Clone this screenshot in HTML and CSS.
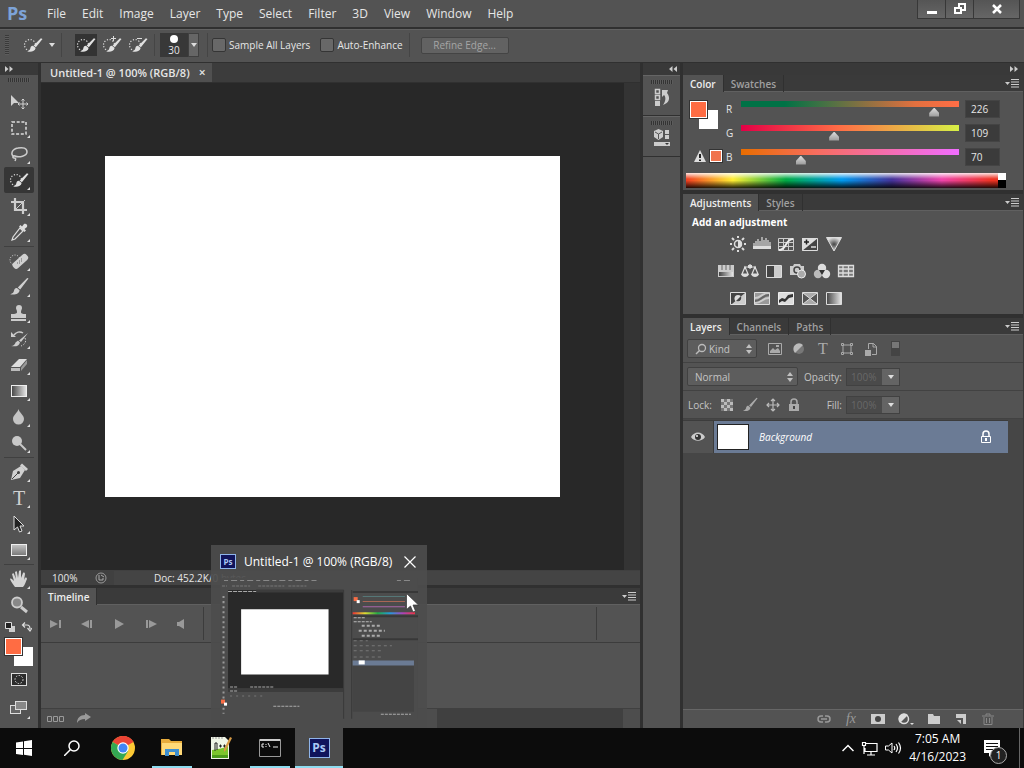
FILE: index.html
```html
<!DOCTYPE html>
<html lang="en">
<head>
    <meta charset="utf-8">
    <meta name="viewport" content="width=device-width, initial-scale=1.0">
    <title>Untitled-1 @ 100% (RGB/8)</title>
    <link rel="stylesheet" href="styles.css">
</head>
<body>
    <!-- shared icons -->
    <svg class="defs" aria-hidden="true">
        <defs>
            <linearGradient id="gray" x1="0" x2="1"><stop offset="0" stop-color="#444"/><stop offset="1" stop-color="#e8e8e8"/></linearGradient>
            <linearGradient id="grayDown" x1="0" x2="0" y1="0" y2="1"><stop offset="0" stop-color="#c4c4c4"/><stop offset="1" stop-color="#777"/></linearGradient>
            <radialGradient id="vib"><stop offset="0" stop-color="#444"/><stop offset="1" stop-color="#ddd"/></radialGradient>
            <linearGradient id="spectrum" x1="0" x2="1"><stop offset="0" stop-color="#e33"/><stop offset=".2" stop-color="#dd3"/><stop offset=".4" stop-color="#2a4"/><stop offset=".6" stop-color="#29d"/><stop offset=".8" stop-color="#a4b"/><stop offset="1" stop-color="#e34"/></linearGradient>
        </defs>
        <symbol id="menu" viewBox="0 0 14 9"><path d="M0 3h5L2.500 6z" fill="#ccc"/><path d="M6 .5h8M6 3h8M6 5.500h8M6 8h8" stroke="#ccc"/></symbol>
        <symbol id="quick" viewBox="0 0 20 20"><circle cx="7" cy="10" r="5.500" fill="none" stroke="#ddd" stroke-width="1.200" stroke-dasharray="1.200 1.680"/><path d="M19.500 4l-6.600 8.200-2.300-1.700 7.300-7.200zM10 10.800l2.600 2.200c-.5 3.300-4.600 4.600-8.600 3.400 2.500-.6 3-1.700 3.400-3.500.3-1.200 1.200-2.200 2.600-2.100z" fill="#e0e0e0"/></symbol>
        <symbol id="brush" viewBox="0 0 20 20"><path d="M19.500 1.500l-8.300 11-2.400-2 9.400-9.600zM8 11l2.600 2.300c-.4 3.600-4.400 4.800-9.400 4 2.900-.6 3.500-2.200 4-4.200.4-1.500 1.400-2.300 2.800-2.100z"/></symbol>
        <symbol id="updown" viewBox="0 0 6 10"><path d="M0 4l3-4 3 4zM0 6h6l-3 4z" fill="#c0c0c0"/></symbol>
        <symbol id="down" viewBox="0 0 6 4"><path d="M0 0h6L3 4z" fill="#ddd"/></symbol>
        <symbol id="right2" viewBox="0 0 8 6"><path d="M0 0l3.500 3L0 6zM4.500 0L8 3 4.500 6z" fill="#ccc"/></symbol>
        <symbol id="left2" viewBox="0 0 8 6"><path d="M3.500 0L0 3l3.500 3zM8 0L4.500 3 8 6z" fill="#ccc"/></symbol>
        <symbol id="lock" viewBox="0 0 12 14"><path d="M3 6V4a3 3 0 016 0v2" fill="none" stroke="currentColor" stroke-width="1.500"/><path d="M1.500 6.500h9v6h-9z" fill="none" stroke="currentColor"/><path d="M6 8v3" stroke="currentColor" stroke-width="2"/></symbol>
    </svg>

    <header class="menubar">
        <span class="logo">Ps</span>
        <nav class="menus">
            <button>File</button>
            <button>Edit</button>
            <button>Image</button>
            <button>Layer</button>
            <button>Type</button>
            <button>Select</button>
            <button>Filter</button>
            <button>3D</button>
            <button>View</button>
            <button>Window</button>
            <button>Help</button>
        </nav>
        <div class="window-buttons">
            <button aria-label="Minimize"><svg width="12" height="12"><path d="M1 8h10v3H1z" fill="#fff"/></svg></button>
            <button aria-label="Restore"><svg width="12" height="12"><path d="M5 4V1h6v6H8M1 5h6v5H1z" fill="none" stroke="#fff" stroke-width="2"/></svg></button>
            <button class="close" aria-label="Close"><svg width="12" height="12"><path d="M2 2l8 8M10 2l-8 8" stroke="#fff" stroke-width="2.500"/></svg></button>
        </div>
    </header>

    <section class="options">
        <span class="grip-v"></span>
        <button class="preset" aria-label="Tool preset"><svg width="20" height="20"><use href="#quick"/></svg><svg width="6" height="4"><use href="#down"/></svg></button>
        <div class="modes">
            <button class="on" aria-label="New selection"><svg width="20" height="20"><use href="#quick"/></svg></button>
            <button aria-label="Add to selection"><svg width="20" height="20"><use href="#quick"/><path d="M9 3.500h5M11.500 1v5" stroke="#ddd"/></svg></button>
            <button aria-label="Subtract from selection"><svg width="20" height="20"><use href="#quick"/><path d="M9 3.500h5" stroke="#ddd"/></svg></button>
        </div>
        <div class="size">
            <span class="tip"><i></i>30</span>
            <button aria-label="Brush picker"><svg width="6" height="4"><use href="#down"/></svg></button>
        </div>
        <div class="checks">
            <label><input type="checkbox">Sample All Layers</label>
            <label><input type="checkbox">Auto-Enhance</label>
        </div>
        <button class="refine" disabled>Refine Edge...</button>
    </section>

    <main class="workspace">
        <aside class="toolbar">
            <div class="strip"><svg width="8" height="6"><use href="#right2"/></svg></div>
            <span class="grip"></span>
            <div class="tools">
                <button class="tool single" aria-label="Move"><svg width="20" height="20"><path d="M2 3v11l3-3h5z" fill="#d0d0d0"/><path d="M14 7v10M9 12h10M12.500 8.500L14 7l1.500 1.500M12.500 15.500L14 17l1.500-1.500M10.500 10.500L9 12l1.500 1.500M17.500 10.500L19 12l-1.500 1.500" fill="none" stroke="#d0d0d0"/></svg></button>
                <button class="tool" aria-label="Marquee"><svg width="20" height="20"><path d="M3 4h14v12H3z" fill="none" stroke="#ddd" stroke-width="1.500" stroke-dasharray="3 1.700"/></svg></button>
                <button class="tool" aria-label="Lasso"><svg width="20" height="20"><path d="M5 13C1 10 3 5 9 4c5-1 9 0 9 4s-8 6-12 4c-2-1-3 2-1 2s2 1 1 3" fill="none" stroke="#ccc" stroke-width="1.500"/></svg></button>
                <button class="tool on" aria-label="Quick selection"><svg width="20" height="20"><use href="#quick"/></svg></button>
                <button class="tool" aria-label="Crop"><svg width="20" height="20"><path d="M6 2v12h12M2 6h12v12" fill="none" stroke="#ccc" stroke-width="2.200"/><path d="M7 13l9-9" stroke="#ccc"/></svg></button>
                <button class="tool" aria-label="Eyedropper"><svg width="20" height="20"><path d="M11 6l3 3-8 8-3 1 1-3z" fill="none" stroke="#ddd" stroke-width="1.200"/><path d="M10 4.500l1.500-1.500 1.500 1.500L15 2c2-1 4 1 3 3l-2.500 2L17 8.500 15.500 10z" fill="#ddd"/></svg></button>
                <hr>
                <button class="tool" aria-label="Healing brush"><svg width="20" height="20"><circle cx="6" cy="9" r="5" fill="none" stroke="#ddd" stroke-dasharray="1 1.500"/><rect x="2" y="7" width="18" height="7" rx="3" transform="rotate(-42 11 10)" fill="#d0d0d0"/><path d="M8 12h1M10 10h1M12 8h1M10 12h1M12 10h1" stroke="#666"/></svg></button>
                <button class="tool" aria-label="Brush"><svg width="20" height="20" fill="#d0d0d0"><use href="#brush"/></svg></button>
                <button class="tool" aria-label="Clone stamp"><svg width="20" height="20"><path d="M10 2c2 0 3 1 3 3 0 1.500-1 2-1 4 0 1.500 1 2 5 2v4H2v-4c5 0 6-.5 6-2 0-2-1-2.500-1-4 0-2 1-3 3-3zM2 16h15v2H2z" fill="#ccc"/></svg></button>
                <button class="tool" aria-label="History brush"><svg width="20" height="20"><path d="M19 4l-7 9-2-1.500zM9 11.500l2 2c-1 3.500-4 4.500-9 3.500 3 0 4-2 4.500-3.500zM2 3v5h5z" fill="#ccc"/><path d="M5 6c2-3 6-4 9-2" fill="none" stroke="#ccc" stroke-width="1.500"/><path d="M16 9c2 4-1 7-4 8" fill="none" stroke="#ccc" stroke-dasharray="1.500 1.500"/></svg></button>
                <button class="tool" aria-label="Eraser"><svg width="20" height="20"><path d="M2 12l8-8h8l-7 8z" fill="#ddd"/><path d="M2 13h9v3H2z" fill="#bbb"/><path d="M12 12.500L18 5v4l-6 7z" fill="#999"/></svg></button>
                <button class="tool" aria-label="Gradient"><svg width="20" height="20"><rect x="2.500" y="4.500" width="15" height="11" fill="url(#gray)" stroke="#eee"/></svg></button>
                <button class="tool" aria-label="Blur"><svg width="20" height="20"><path d="M9.500 2c1 4 5.500 6 5.500 10a5.500 5.500 0 01-11 0c0-4 4.500-6 5.500-10z" fill="#c4c4c4"/></svg></button>
                <button class="tool" aria-label="Dodge"><svg width="20" height="20"><circle cx="8" cy="8" r="5" fill="#c8c8c8"/><path d="M11 11l6 6" stroke="#c8c8c8" stroke-width="2"/></svg></button>
                <hr>
                <button class="tool" aria-label="Pen"><svg width="20" height="20"><path d="M2 18l2-9 8-5 4 4-5 8z" fill="#d0d0d0"/><path d="M12 2.500l6 5.500" stroke="#d0d0d0" stroke-width="3"/><path d="M3 17l6-6" stroke="#444"/><circle cx="9.500" cy="10.500" r="1.500" fill="#444"/></svg></button>
                <button class="tool type" aria-label="Type">T</button>
                <button class="tool" aria-label="Path selection"><svg width="20" height="20"><path d="M5 2v14l3.500-3 2 5 2.500-1-2-5h4z" fill="#222" stroke="#ddd"/></svg></button>
                <button class="tool" aria-label="Rectangle"><svg width="20" height="20"><rect x="2.500" y="4.500" width="15" height="11" fill="url(#grayDown)" stroke="#eee"/></svg></button>
                <hr>
                <button class="tool" aria-label="Hand"><svg width="20" height="20"><path d="M6 18C4 15 2 13 1 10c1-1 2 0 4 2L3 5c1-1 2-1 2 0l2 5-1-7c1-1 2-1 2 0l1 6 1-7c1-1 2-1 2 0v7l2-5c1-1 2 0 2 1l-1 6 1-2c1-1 2 0 2 1-1 2-2 6-4 8z" fill="#d4d4d4"/></svg></button>
                <button class="tool single" aria-label="Zoom"><svg width="20" height="20"><circle cx="8" cy="7.500" r="5" fill="#888" stroke="#ccc" stroke-width="1.800"/><path d="M12 12l6 5" stroke="#ccc" stroke-width="3"/></svg></button>
            </div>
            <div class="swap">
                <svg width="10" height="10"><path d="M4 4h6v6H4z" fill="#ccc"/><path d="M.5.500h6v6h-6z" fill="#222" stroke="#ddd"/></svg>
                <svg width="11" height="10"><path d="M2 3h4c2 0 3 1 3 4M4 .5L1.500 3 4 5.500M6.500 6L9 9l2-3" fill="none" stroke="#ddd" stroke-width="1.200"/></svg>
            </div>
            <div class="swatches"><button class="fg" aria-label="Foreground color"></button><button class="bg" aria-label="Background color"></button></div>
            <button class="tool mode single" aria-label="Quick mask"><svg width="20" height="20"><rect x="2.500" y="3.500" width="15" height="12" fill="#2c2c2c" stroke="#ddd"/><circle cx="10" cy="9.500" r="4" fill="none" stroke="#ddd" stroke-dasharray="1.500 1.500"/></svg></button>
            <button class="tool mode" aria-label="Screen mode"><svg width="20" height="20"><rect x="1.500" y="7.500" width="10" height="8" fill="#666" stroke="#ddd"/><rect x="6.500" y="3.500" width="11" height="8" fill="#888" stroke="#ddd"/></svg></button>
        </aside>

        <section class="document">
            <div class="doc-tabs">
                <div class="doc-tab">Untitled-1 @ 100% (RGB/8)<button aria-label="Close tab">×</button></div>
            </div>
            <div class="stage">
                <div class="pasteboard"><div class="artboard"></div></div>
                <div class="scroll-track"></div>
            </div>
            <div class="status">
                <span class="zoom">100%</span>
                <button aria-label="Adobe Drive"><svg width="12" height="12"><circle cx="6" cy="6" r="5" fill="none" stroke="#999"/><path d="M4 3v5h4V6M6 3l3 2" fill="none" stroke="#aaa"/></svg></button>
                <span class="doc-size">Doc: 452.2K/0 bytes</span>
            </div>
            <div class="timeline">
                <div class="tabs"><button class="tab on">Timeline</button><button class="panel-menu" aria-label="Timeline menu"><svg width="14" height="9"><use href="#menu"/></svg></button></div>
                <div class="playback">
                    <button aria-label="First frame"><svg width="14" height="10"><path d="M1 1l8 4-8 4zM10 1h2v8h-2z" fill="#999"/></svg></button>
                    <button aria-label="Previous frame"><svg width="14" height="10"><path d="M8 1L0 5l8 4zM9 1h2v8H9z" fill="#999"/></svg></button>
                    <button aria-label="Play"><svg width="14" height="10"><path d="M2 0l9 5-9 5z" fill="#999"/></svg></button>
                    <button aria-label="Next frame"><svg width="14" height="10"><path d="M1 1h2v8H1zM4 1l8 4-8 4z" fill="#999"/></svg></button>
                    <button aria-label="Mute"><svg width="8" height="10"><path d="M0 3h2l5-3v10L2 7H0z" fill="#999"/></svg></button>
                    <span class="ruler"></span>
                </div>
                <div class="tracks"></div>
                <div class="timeline-foot">
                    <svg width="18" height="8"><path d="M.5 1.500h4v5h-4zM6.500 1.500h4v5h-4zM12.500 1.500h4v5h-4z" fill="none" stroke="#999"/></svg>
                    <svg width="14" height="11"><path d="M8 0l6 4-6 4V6C4 6 2 7 0 10c0-5 3-8 8-8z" fill="#999"/></svg>
                    <span class="hbar"></span>
                </div>
            </div>
        </section>

        <aside class="dock">
            <div class="strip"><svg width="8" height="6"><use href="#left2"/></svg></div>
            <div class="dock-group"><span class="grip"></span><button aria-label="History"><svg width="18" height="20"><path d="M2.500 2.500h4v4h-4zM2.500 8.500h4v4h-4z" fill="none" stroke="#ccc" stroke-width="1.500"/><path d="M2 14h5v5H2z" fill="#ccc"/><path d="M9 3h6l-1 3c4 5 2 10-4 12 3-4 3-8 1-10l-2 2z" fill="#ccc"/></svg></button></div>
            <div class="dock-group"><span class="grip"></span><button aria-label="Properties"><svg width="18" height="20"><path d="M5.500 1L10 3v6l-4.500 3L1 9V3z" fill="#ccc"/><path d="M2 4l3.500 2L9 4M5.500 6v5" stroke="#555" fill="none"/><path d="M12 2h4v4h-4zM12 7h4v4h-4zM1 14h16v4H1z" fill="#ccc"/><path d="M12 15h4l-2 2z" fill="#333"/></svg></button></div>
        </aside>

        <aside class="panels">
            <div class="strip end"><svg width="8" height="6"><use href="#right2"/></svg></div>

            <section class="panel">
                <div class="tabs"><button class="tab on">Color</button><button class="tab">Swatches</button><button class="panel-menu" aria-label="Color menu"><svg width="14" height="9"><use href="#menu"/></svg></button></div>
                <div class="color">
                    <div class="color-side">
                        <div class="swatches"><button class="fg" aria-label="Set foreground color"></button><button class="bg" aria-label="Set background color"></button></div>
                        <div class="gamut"><svg width="12" height="12"><path d="M6 0l6 12H0z" fill="#ddd"/><path d="M6 4v4M6 9.500v1.500" stroke="#222" stroke-width="2"/></svg><i></i></div>
                    </div>
                    <div class="channels">
                        <div class="channel"><label for="red">R</label><div class="slider red"><input type="range" id="red" max="255" value="226"></div><input type="text" value="226" aria-label="Red value"></div>
                        <div class="channel"><label for="green">G</label><div class="slider green"><input type="range" id="green" max="255" value="109"></div><input type="text" value="109" aria-label="Green value"></div>
                        <div class="channel"><label for="blue">B</label><div class="slider blue"><input type="range" id="blue" max="255" value="70"></div><input type="text" value="70" aria-label="Blue value"></div>
                    </div>
                </div>
                <div class="ramp"><span class="hues"></span><span class="bw"></span></div>
            </section>

            <section class="panel">
                <div class="tabs"><button class="tab on">Adjustments</button><button class="tab">Styles</button><button class="panel-menu" aria-label="Adjustments menu"><svg width="14" height="9"><use href="#menu"/></svg></button></div>
                <div class="adjust">
                    <h2>Add an adjustment</h2>
                    <div class="adjust-row">
                        <button aria-label="Brightness/Contrast"><svg width="18" height="16"><circle cx="9" cy="8" r="3.500" fill="none" stroke="#ddd" stroke-width="1.500"/><path d="M9 4a4 4 0 010 8zM8 0h2v2H8zM8 14h2v2H8zM1 7h2v2H1zM15 7h2v2h-2z" fill="#ddd"/><path d="M3 2l2 2M15 2l-2 2M3 14l2-2M15 14l-2-2" stroke="#ddd" stroke-width="2"/></svg></button>
                        <button aria-label="Levels"><svg width="18" height="16"><path d="M0 10h18v3H0z" fill="#ddd"/><path d="M1 10V7M3 10V5M5 10V3M7 10V5M9 10V1M11 10V4M13 10V2M15 10V4M17 10V6" stroke="#ddd" stroke-width="1.200"/></svg></button>
                        <button aria-label="Curves"><svg width="18" height="16"><path d="M1.500 2.500h15v12h-15zM1 6.500h16M1 10.500h16M6.500 2v13M11.500 2v13" fill="none" stroke="#ccc"/><path d="M2 14c8 0 6-11 14-11" fill="none" stroke="#eee" stroke-width="2"/></svg></button>
                        <button aria-label="Exposure"><svg width="18" height="16"><path d="M1.500 2.500h15v12h-15z" fill="#444" stroke="#ddd"/><path d="M1 15V2h16z" fill="#ddd"/><path d="M3 6h5M5.500 3.500v5" stroke="#222" stroke-width="1.500"/><path d="M10 11h5" stroke="#ddd" stroke-width="1.500"/></svg></button>
                        <button aria-label="Vibrance"><svg width="18" height="16"><path d="M1.500 1.500h15L9 15z" fill="url(#vib)" stroke="#ddd"/></svg></button>
                    </div>
                    <div class="adjust-row">
                        <button aria-label="Hue/Saturation"><svg width="18" height="16"><path d="M1 2h16v12H1z" fill="#ccc"/><path d="M5 2v5M9 2v5M13 2v5" stroke="#666"/><path d="M2 9h14v4H2z" fill="url(#gray)"/></svg></button>
                        <button aria-label="Color balance"><svg width="18" height="16"><path d="M9 1v5M3 4h12M4 4l-3 7h6zM14 4l-3 7h6z" fill="none" stroke="#ddd" stroke-width="1.200"/><path d="M0 11h8c-1 4-7 4-8 0zM10 11h8c-1 4-7 4-8 0zM7 2h4v3H7z" fill="#ddd"/></svg></button>
                        <button aria-label="Black and white"><svg width="18" height="16"><path d="M1.500 2.500h15v12h-15z" fill="#444" stroke="#ddd"/><path d="M9 3h7v11H9z" fill="#ccc"/></svg></button>
                        <button aria-label="Photo filter"><svg width="18" height="16"><path d="M1 3h3l1-2h6l1 2h3v9H1z" fill="#ccc"/><circle cx="8" cy="7" r="3" fill="none" stroke="#444" stroke-width="1.500"/><circle cx="12.500" cy="11" r="4" fill="#aaa" stroke="#eee"/></svg></button>
                        <button aria-label="Channel mixer"><svg width="18" height="16"><circle cx="9" cy="5" r="4.200" fill="#ddd"/><circle cx="5" cy="11" r="4.200" fill="#bbb"/><circle cx="13" cy="11" r="4.200" fill="#ddd"/><path d="M6 7h6l-3 5z" fill="#333"/></svg></button>
                        <button aria-label="Color lookup"><svg width="18" height="16"><path d="M1 2h16v12H1z" fill="#777"/><path d="M1.500 2.500h15v11h-15zM1 6h16M1 10h16M6 2v12M11.500 2v12" fill="none" stroke="#ddd" stroke-width="1.300"/></svg></button>
                    </div>
                    <div class="adjust-row">
                        <button aria-label="Invert"><svg width="18" height="16"><path d="M1.500 2.500h15v12h-15z" fill="#444" stroke="#ddd"/><path d="M3 14L16 3v11z" fill="#ccc"/><circle cx="9" cy="8.500" r="3.500" fill="#ddd"/><path d="M7 11l5-5c1 4-1 6-5 5z" fill="#444"/></svg></button>
                        <button aria-label="Posterize"><svg width="18" height="16"><path d="M1.500 2.500h15v12h-15z" fill="#999" stroke="#ddd"/><path d="M2 8C8 8 9 3 16 3M2 13c7 0 7-5 14-5" fill="none" stroke="#ccc" stroke-width="2"/><path d="M2 11c6 0 7-6 14-6" fill="none" stroke="#666" stroke-width="2"/></svg></button>
                        <button aria-label="Threshold"><svg width="18" height="16"><path d="M1.500 2.500h15v12h-15z" fill="#ddd" stroke="#eee"/><path d="M2 10l3-2 3 1 3-4 5-1v3l-4 1-4 4-3-1-3 2z" fill="#333"/></svg></button>
                        <button aria-label="Selective color"><svg width="18" height="16"><path d="M1.500 2.500h15v12h-15z" fill="#aaa" stroke="#ddd"/><path d="M2 3l7 5.500L2 14zM16 3L9 8.500l7 5.500z" fill="#555"/><path d="M2 3l14 11M16 3L2 14" stroke="#ddd"/></svg></button>
                        <button aria-label="Gradient map"><svg width="18" height="16"><path d="M1.500 2.500h15v12h-15z" fill="url(#gray)" stroke="#ddd"/></svg></button>
                    </div>
                </div>
            </section>

            <section class="panel layers">
                <div class="tabs"><button class="tab on">Layers</button><button class="tab">Channels</button><button class="tab">Paths</button><button class="panel-menu" aria-label="Layers menu"><svg width="14" height="9"><use href="#menu"/></svg></button></div>
                <div class="layer-row">
                    <div class="pick kind">
                        <select aria-label="Filter type"><option>Kind</option></select>
                        <svg class="find" width="12" height="12"><circle cx="7" cy="5" r="3.500" fill="none" stroke="#bbb" stroke-width="1.300"/><path d="M4.500 7.500L1 11" stroke="#bbb" stroke-width="1.500"/></svg>
                        <svg class="arrows" width="6" height="10"><use href="#updown"/></svg>
                    </div>
                    <div class="filters">
                        <button aria-label="Pixel layers"><svg width="14" height="14"><path d="M.5 1.500h13v11H.5z" fill="none" stroke="#aaa"/><path d="M2 11V9l3-3 2 2 3-2 2 3v2z" fill="#aaa"/><path d="M8 3h3v2H8z" fill="#aaa"/></svg></button>
                        <button aria-label="Adjustment layers"><svg width="14" height="14"><circle cx="7" cy="7" r="5" fill="#777"/><path d="M3 11a5.500 5.500 0 018-8z" fill="#bbb"/></svg></button>
                        <button class="letter" aria-label="Type layers">T</button>
                        <button aria-label="Shape layers"><svg width="14" height="14"><path d="M3 3h8v8H3z" fill="none" stroke="#aaa"/><path d="M1.500 1.500h2v2h-2zM10.500 1.500h2v2h-2zM1.500 10.500h2v2h-2zM10.500 10.500h2v2h-2z" fill="#555" stroke="#aaa"/></svg></button>
                        <button aria-label="Smart objects"><svg width="14" height="14"><path d="M4.500 7V1.500h5l3 3v8H8M9 1v4h4" fill="none" stroke="#aaa"/><path d="M1 8h6v6H1z" fill="#aaa"/></svg></button>
                        <button class="toggle" aria-label="Toggle filtering"></button>
                    </div>
                </div>
                <div class="layer-row">
                    <div class="pick blend">
                        <select aria-label="Blend mode" disabled><option>Normal</option></select>
                        <svg class="arrows" width="6" height="10"><use href="#updown"/></svg>
                    </div>
                    <label class="percent">Opacity:<span><input type="text" value="100%" disabled><button disabled aria-label="Opacity slider"><svg width="6" height="4"><use href="#down"/></svg></button></span></label>
                </div>
                <div class="layer-row">
                    <div class="locks">
                        <span>Lock:</span>
                        <button aria-label="Lock pixels"><svg width="14" height="14"><path d="M1 1h12v12H1z" fill="#777"/><path d="M1 1h3v3H1zM7 1h3v3H7zM4 4h3v3H4zM10 4h3v3h-3zM1 7h3v3H1zM7 7h3v3H7zM4 10h3v3H4zM10 10h3v3h-3z" fill="#bbb"/></svg></button>
                        <button aria-label="Lock image"><svg width="16" height="16" fill="#aaa"><use href="#brush"/></svg></button>
                        <button aria-label="Lock position"><svg width="14" height="14"><path d="M7 1v12M1 7h12M5 3l2-2 2 2M5 11l2 2 2-2M3 5L1 7l2 2M11 5l2 2-2 2" fill="none" stroke="#bbb" stroke-width="1.200"/></svg></button>
                        <button aria-label="Lock all"><svg width="12" height="14"><path d="M3 6V4a3 3 0 016 0v2" fill="none" stroke="#aaa" stroke-width="1.500"/><path d="M1 6h10v7H1z" fill="#aaa"/><path d="M6 8v3" stroke="#444" stroke-width="2"/></svg></button>
                    </div>
                    <label class="percent">Fill:<span><input type="text" value="100%" disabled><button disabled aria-label="Fill slider"><svg width="6" height="4"><use href="#down"/></svg></button></span></label>
                </div>
                <div class="layer-list">
                    <div class="layer">
                        <button class="eye" aria-label="Visibility"><svg width="14" height="10"><path d="M0 5c3-6 11-6 14 0-3 5-11 5-14 0z" fill="#ccc"/><circle cx="7" cy="5" r="3" fill="#333"/><circle cx="6" cy="4" r="1" fill="#eee"/></svg></button>
                        <div class="layer-body"><span class="layer-thumb"></span><em>Background</em><svg width="12" height="14"><use href="#lock"/></svg></div>
                    </div>
                </div>
                <div class="layer-foot">
                    <button aria-label="Link"><svg width="14" height="12"><path d="M6 3H4a3 3 0 000 6h2M8 3h2a3 3 0 010 6H8M4 6h6" fill="none" stroke="#999" stroke-width="1.500"/></svg></button>
                    <button class="fx" aria-label="Layer style">fx</button>
                    <button aria-label="Mask"><svg width="14" height="12"><path d="M0 1h14v10H0z" fill="#ccc"/><circle cx="7" cy="6" r="3" fill="#444"/></svg></button>
                    <button aria-label="Adjustment layer"><svg width="16" height="12"><circle cx="6" cy="6" r="4.500" fill="#555" stroke="#ddd" stroke-width="1.500"/><path d="M2 10a5.500 5.500 0 018-8z" fill="#ddd"/><path d="M12 10h4l-2 2z" fill="#ddd"/></svg></button>
                    <button aria-label="Group"><svg width="14" height="12"><path d="M1 1h5l1 2h6v8H1z" fill="#ccc"/></svg></button>
                    <button aria-label="New layer"><svg width="14" height="12"><path d="M2 1h10v10H9V5H2z" fill="#ccc"/><path d="M3 7h4v4z" fill="#ccc"/></svg></button>
                    <button aria-label="Delete"><svg width="14" height="12"><path d="M1 3h12M5 2.500V1h4v1.500M3 4v7.500h8V4M5.500 5v5M8.500 5v5" fill="none" stroke="#888"/></svg></button>
                </div>
            </section>
        </aside>
    </main>

    <footer class="taskbar">
        <button class="task start" aria-label="Start"><svg width="16" height="16"><path d="M0 2.500l7-1V8H0zM8 1.300L16 0v8H8zM0 9h7v6l-7-1zM8 9h8v7l-8-1.200z" fill="#fff"/></svg></button>
        <button class="task search" aria-label="Search"><svg width="16" height="16"><circle cx="10" cy="6" r="5" fill="none" stroke="#fff" stroke-width="1.500"/><path d="M6.500 9.500L0 16" stroke="#fff" stroke-width="1.500"/></svg></button>
        <button class="task" aria-label="Chrome"><svg width="24" height="24"><circle cx="12" cy="12" r="12" fill="#fcc934"/><path d="M12 12L1.600 6A12 12 0 0122.400 6z" fill="#ea4335"/><path d="M12 6h10.400A12 12 0 0012 0z" fill="#ea4335"/><path d="M1.600 6A12 12 0 0011.500 24l5.700-9-5.200-3z" fill="#34a853"/><circle cx="12" cy="12" r="5.700" fill="#fff"/><circle cx="12" cy="12" r="4.500" fill="#4285f4"/></svg></button>
        <button class="task open" aria-label="File Explorer"><svg width="22" height="20"><path d="M0 1h8l2 2h11v14H0z" fill="#e8ac3c"/><path d="M1 5h20v12H1z" fill="#ffd978"/><path d="M4 18v-7h14v7h-4v-4H8v4z" fill="#3f8fd0"/></svg></button>
        <button class="task" aria-label="Notepad++"><svg width="24" height="24"><path d="M2 1h14l4 4v18H2z" fill="#f0f5e6"/><path d="M3 14c5-1 10-1 16-4v12H3z" fill="#7cc52c"/><path d="M3 19h16v3H3z" fill="#4c9a1c"/><path d="M4 1v2M7 1v2M10 1v2M13 1v2" stroke="#999"/><path d="M6 7v8M6 7h2v7M10 10h3M14 10h3M11.500 8.500v3M15.500 8.500v3" fill="none" stroke="#222"/><path d="M21 1l2 1-6 12-2 2v-3z" fill="#d79a45"/></svg></button>
        <button class="task open" aria-label="Command Prompt"><svg width="22" height="20"><path d="M.5 1.500h21v17H.5z" fill="#0b0b0b" stroke="#999"/><path d="M1 1h20v2H1z" fill="#ccc"/><path d="M3 6h2M3 6v3h2M7 6v1M7 8v1M9 5l2 4M14 9h5" stroke="#eee" fill="none"/></svg></button>
        <div class="task-wrap">
            <button class="task open active" aria-label="Photoshop"><span class="ps-icon">Ps</span></button>
            <div class="preview">
                <div class="preview-head"><span class="ps-icon small">Ps</span><span class="preview-title">Untitled-1 @ 100% (RGB/8)</span><button aria-label="Close window"><svg width="12" height="12"><path d="M.5.500l11 11M11.500.500l-11 11" stroke="#fff" stroke-width="1.200"/></svg></button></div>
                <svg class="mini" viewBox="0 0 197 140">
                    <path d="M0 0h197v140H0z" fill="#4c4c4c"/>
                    <path d="M8 12h115v98H8z" fill="#292929"/>
                    <path d="M21 31h87v65H21z" fill="#fff"/>
                    <path d="M36 13h87M8 112h115" stroke="#3c3c3c" stroke-width="3"/>
                    <path d="M123 12v128M131 12v128" stroke="#3a3a3a"/>
                    <path d="M132 14h65M132 38h65M132 61h65" stroke="#383838" stroke-width="2"/>
                    <path d="M132 86h61v47h-61z" fill="#444"/>
                    <path d="M132 82h61v5h-61z" fill="#6b7b94"/><path d="M138 82h6v4h-6z" fill="#fff"/>
                    <path d="M4 2.500h92M176 2.500h16" stroke="#888" stroke-dasharray="4 3 6 3"/>
                    <path d="M2 8h5M12 8h18M38 8h26M68 8h18" stroke="#777" stroke-dasharray="3 1"/>
                    <path d="M8 13.500h28" stroke="#aaa" stroke-dasharray="4 1"/>
                    <path d="M3.500 18v102M3.500 129v6" stroke="#999" stroke-width="2" stroke-dasharray="2 3"/>
                    <path d="M1 121h4v4H1z" fill="#f76d46"/><path d="M4 124h3v3H4z" fill="#fff"/>
                    <path d="M133 19h4v4h-4z" fill="#f76d46"/><path d="M136 22h3v3h-3z" fill="#fff"/>
                    <path d="M142 18.500h42" stroke="#577"/><path d="M142 23.500h42" stroke="#a65"/><path d="M142 28.500h42" stroke="#a6a"/>
                    <path d="M132 34h62v2h-62z" fill="url(#spectrum)"/>
                    <path d="M133 39.500h12M133 43.500h18" stroke="#bbb" stroke-dasharray="3 1"/>
                    <path d="M141 47.500h20M138 52.500h26M141 57.500h20" stroke="#aaa" stroke-width="2" stroke-dasharray="3 2"/>
                    <path d="M133 62.500h14M133 67.500h38M133 72.500h28M133 78.500h30" stroke="#777" stroke-dasharray="3 3"/>
                    <path d="M10 108.500h7M30 108.500h24M10 112.500h7M53 127.500h26M160 135.500h30" stroke="#aaa" stroke-dasharray="3 1"/>
                    <path d="M10 117.500h36" stroke="#777" stroke-dasharray="2 4"/>
                </svg>
                <svg class="cursor" width="13" height="20"><path d="M.5.500v16l4-3.500 2.500 6 2.500-1L7 12h5.500z" fill="#fff" stroke="#333" stroke-width=".7"/></svg>
            </div>
        </div>
        <div class="tray">
            <button aria-label="Show hidden icons"><svg width="12" height="8"><path d="M.5 7L6 1.500 11.500 7" fill="none" stroke="#fff" stroke-width="1.500"/></svg></button>
            <button aria-label="Network"><svg width="17" height="15"><path d="M5 2.500h11v8H4V7M10 11v3M6 14h8M1.500 1.500h3v3h-3zM3 4v9" fill="none" stroke="#fff" stroke-width="1.200"/></svg></button>
            <button aria-label="Volume"><svg width="17" height="14"><path d="M.5 5h3L7 2v10L3.500 9h-3z" fill="none" stroke="#fff"/><path d="M9 5q1.500 2 0 4M11 3q3 4 0 8M13.500 1.500q4 5.500 0 11" fill="none" stroke="#fff" stroke-width="1.200"/></svg></button>
            <button class="clock"><span>7:05 AM</span><span>4/16/2023</span></button>
            <button class="notes" aria-label="Notifications"><svg width="16" height="17"><path d="M0 0h16v13H8l-3 4v-4H0z" fill="#fff"/><path d="M2 3.500h12M2 6.500h12M2 9.500h12" stroke="#111"/></svg><span class="badge">1</span></button>
            <span class="show-desktop"></span>
        </div>
    </footer>
</body>
</html>
```
FILE: styles.css
```css
* {
    box-sizing: border-box;
}

body {
    margin: 0;
    min-height: 100vh;
    display: flex;
    flex-direction: column;
    background-color: #535353;
    color: #e6e6e6;
    font-family: "Open Sans", "Noto Sans", sans-serif;
    font-size: 10px;
    line-height: 14px;
}

button {
    padding: 0;
    border: none;
    background: none;
    color: inherit;
    font: inherit;
    display: flex;
    align-items: center;
    justify-content: center;
}

input,
select {
    font: inherit;
    color: inherit;
    margin: 0;
}

svg {
    display: block;
    flex-shrink: 0;
}

.defs {
    position: absolute;
    width: 0;
    height: 0;
}

/* menu bar */
.menubar {
    display: flex;
    height: 29px;
    border-bottom: 2px solid #303030;
}

.logo {
    width: 39px;
    padding-left: 7px;
    font-size: 18px;
    line-height: 26px;
    font-weight: bold;
    color: #7da3d8;
}

.menus {
    display: flex;
    flex: 1;
    font-size: 12px;
}

.menus button {
    padding: 0 8px;
}

.window-buttons {
    display: flex;
    height: 19px;
    margin-right: 4px;
    border: 1px solid #383838;
    border-top: none;
    background: linear-gradient(#555, #666);
}

.window-buttons button {
    width: 28px;
    border-right: 1px solid #383838;
}

.window-buttons .close {
    width: 45px;
    border-right: none;
}

/* options bar */
.options {
    display: flex;
    align-items: center;
    height: 34px;
    padding: 0 0 2px 5px;
    border-top: 1px solid #626262;
    border-bottom: 1px solid #303030;
}

.grip-v {
    width: 4px;
    height: 20px;
    background: repeating-linear-gradient(#3a3a3a 0 1px, #5c5c5c 1px 2px);
}

.preset {
    gap: 6px;
    width: 53px;
    height: 24px;
    padding-left: 7px;
    border-right: 1px solid #454545;
}

.modes {
    display: flex;
    gap: 4px;
    padding: 0 5px 0 13px;
    border-right: 1px solid #454545;
}

.modes button {
    width: 22px;
    height: 22px;
}

.modes .on {
    background-color: #333;
}

.size {
    display: flex;
    height: 24px;
    padding: 0 8px 0 5px;
    border-right: 1px solid #454545;
}

.size button {
    width: 11px;
    background-color: #666;
    border: 1px solid #404040;
}

.tip {
    width: 28px;
    display: flex;
    flex-direction: column;
    align-items: center;
    background-color: #383838;
    line-height: 14px;
}

.tip i {
    width: 8px;
    height: 8px;
    margin-top: 2px;
    border-radius: 50%;
    background-color: #fff;
}

.checks {
    display: flex;
    gap: 10px;
    padding: 0 6px 0 4px;
    height: 24px;
    border-right: 1px solid #454545;
}

.checks label {
    display: flex;
    align-items: center;
    gap: 3px;
}

.checks input {
    appearance: none;
    width: 14px;
    height: 14px;
    border: 1px solid #353535;
    border-radius: 2px;
    background-color: #686868;
}

.refine {
    margin-left: 11px;
    width: 88px;
    height: 17px;
    border: 1px solid #444;
    border-radius: 2px;
    background-color: #626262;
    color: #a5a5a5;
}

/* workspace */
.workspace {
    display: flex;
    flex: 1;
    background-color: #303030;
    gap: 3px;
}

.strip {
    height: 12px;
    padding: 3px 5px;
    display: flex;
    background-color: #393939;
}

.strip.end {
    justify-content: flex-end;
}

.grip {
    display: block;
    width: 22px;
    height: 4px;
    margin: 3px auto;
    background: repeating-linear-gradient(90deg, #333 0 1px, #5c5c5c 1px 2px);
}

.toolbar {
    width: 38px;
    background-color: #535353;
}

.tools {
    margin-top: 7px;
}

.tools hr {
    height: 1px;
    margin: 1px 4px;
    border: none;
    background-color: #404040;
}

.tool {
    position: relative;
    width: 30px;
    height: 26px;
    margin: 0 4px;
}

.tool.on {
    background-color: #363636;
    border-radius: 2px;
}

.tool::after {
    content: "";
    position: absolute;
    right: 4px;
    bottom: 3px;
    border-left: 3px solid transparent;
    border-bottom: 3px solid #ddd;
}

.tool.single::after {
    display: none;
}

.tool.type,
.letter {
    font-family: "Liberation Serif", serif;
    font-size: 20px;
    color: #d0d0d0;
}

.swap {
    display: flex;
    justify-content: space-between;
    padding: 4px 6px 0 5px;
    height: 19px;
}

.swatches {
    display: grid;
    grid-template-columns: 10px 9px 10px;
    grid-template-rows: 10px 9px 10px;
    margin-left: 4px;
}

.swatches button {
    border: 1px solid #fff;
    outline: 1px solid #333;
    outline-offset: -1px;
}

.swatches .fg {
    grid-area: 1 / 1 / 3 / 3;
    z-index: 1;
    border: 2px solid #fff;
    background-color: #ff6c43;
}

.swatches .bg {
    grid-area: 2 / 2 / 4 / 4;
    background-color: #fff;
    outline: none;
}

.tool.mode {
    height: 28px;
}

.document {
    flex: 1;
    display: flex;
    flex-direction: column;
    min-width: 0;
}

.doc-tabs {
    display: flex;
    height: 20px;
    background-color: #3c3c3c;
    border-bottom: 1px solid #303030;
}

.doc-tab {
    display: flex;
    align-items: center;
    gap: 9px;
    padding: 0 6px 0 9px;
    background-color: #505050;
    font-size: 11px;
    font-weight: 600;
}

.doc-tab button {
    font-size: 12px;
}

.stage {
    flex: 1;
    display: flex;
    background-color: #282828;
}

.pasteboard {
    flex: 1;
    display: flex;
    align-items: center;
    justify-content: center;
}

.artboard {
    width: 78%;
    aspect-ratio: 4 / 3;
    background-color: #fff;
}

.scroll-track {
    width: 16px;
    background-color: #343434;
}

.status {
    display: flex;
    align-items: center;
    height: 15px;
    background-color: #404040;
    margin-bottom: 3px;
}

.status .zoom {
    width: 46px;
    padding-left: 11px;
}

.status button {
    width: 27px;
}

.doc-size {
    flex: 1;
    padding-left: 40px;
    background-color: #444;
}

.tabs {
    display: flex;
    height: 17px;
    background-color: #3a3a3a;
    border-bottom: 1px solid #606060;
    color: #a0a0a0;
    font-weight: 600;
}

.tab {
    padding: 0 7px;
    border-right: 1px solid #303030;
    height: 17px;
}

.tab.on {
    background-color: #535353;
    color: #eee;
}

.panel-menu {
    margin-left: auto;
    margin-right: 4px;
}

.playback {
    display: flex;
    align-items: stretch;
    height: 38px;
    padding-left: 8px;
    gap: 18px;
    background-color: #535353;
    border-bottom: 1px solid #3c3c3c;
}

.ruler {
    flex: 1;
    margin: 2px 43px 2px 0;
    border-left: 1px solid #3c3c3c;
    border-right: 1px solid #3c3c3c;
}

.tracks {
    height: 65px;
    background-color: #535353;
}

.timeline-foot {
    display: flex;
    align-items: center;
    gap: 12px;
    height: 20px;
    padding: 0 17px 0 6px;
    border-top: 1px solid #404040;
    background-color: #4d4d4d;
}

.hbar {
    width: 186px;
    height: 19px;
    margin-left: auto;
    background-color: #404040;
}

/* collapsed icon dock */
.dock {
    width: 37px;
    background-color: #535353;
}

.dock .strip {
    justify-content: flex-end;
    padding-right: 3px;
}

.dock-group {
    height: 41px;
    padding-top: 1px;
    border-top: 1px solid #656565;
    border-bottom: 1px solid #303030;
}

.dock-group button {
    margin: 0 auto;
}

/* panels */
.panels {
    width: 341px;
    display: flex;
    flex-direction: column;
    border-right: 1px solid #383838;
}

.panel {
    margin-bottom: 4px;
    background-color: #535353;
}

.color {
    display: flex;
    height: 81px;
    padding-left: 2px;
}

.color-side {
    width: 40px;
    padding-top: 8px;
}

.gamut {
    display: flex;
    gap: 4px;
    padding: 21px 0 0 9px;
}

.gamut i {
    width: 12px;
    height: 12px;
    border: 1px solid #fff;
    background-color: #f0744e;
    outline: 1px solid #333;
}

.channels {
    flex: 1;
    padding: 5px 23px 0 1px;
}

.channel {
    display: flex;
    align-items: center;
    height: 24px;
}

.channel label {
    width: 15px;
}

.slider {
    flex: 1;
    height: 16px;
    margin-right: 6px;
    background-size: 100% 6px;
    background-repeat: no-repeat;
}

.slider.red {
    background-image: linear-gradient(90deg, #007246, #007246 20%, #e2703f 80%, #ff6d46);
}

.slider.green {
    background-image: linear-gradient(90deg, #e20046, #ff6d46 45%, #d6f046);
}

.slider.blue {
    background-image: linear-gradient(90deg, #e86d00, #f76d60 35%, #f06dff);
}

.slider input {
    appearance: none;
    display: block;
    width: calc(100% + 10px);
    height: 10px;
    margin: 0 -5px;
    padding-top: 6px;
    box-sizing: content-box;
    background: none;
}

.slider input::-webkit-slider-thumb {
    appearance: none;
    width: 10px;
    height: 9px;
    background: linear-gradient(#ddd, #999);
    clip-path: polygon(50% 0, 100% 60%, 100% 100%, 0 100%, 0 60%);
}

.channel input[type="text"] {
    width: 35px;
    height: 18px;
    padding: 0 5px;
    border: 1px solid #444;
    background-color: #3b3b3b;
}

.ramp {
    display: flex;
    height: 15px;
    margin: 0 17px 2px 3px;
}

.hues {
    flex: 1;
    background: linear-gradient(#fffd, #fff0 40%, #0000 50%, #000d), linear-gradient(90deg, #f03c20, #fe3 15%, #0a4 32%, #09e 50%, #439 66%, #e4a 82%, #e32 98%);
}

.bw {
    width: 8px;
    background: linear-gradient(#fff 50%, #000 50%);
}

.adjust {
    height: 103px;
    padding: 3px 9px;
}

.adjust h2 {
    margin: 0;
    font-size: 10px;
    line-height: 16px;
    font-weight: bold;
    color: #fff;
}

.adjust-row {
    display: flex;
    justify-content: center;
    gap: 6px;
    width: 188px;
    height: 27px;
}

.layers {
    flex: 1;
    display: flex;
    flex-direction: column;
    margin-bottom: 0;
}

.layer-row {
    display: flex;
    align-items: center;
    height: 28px;
    padding: 0 4px;
    border-bottom: 1px solid #424242;
}

.pick {
    display: grid;
    align-items: center;
    height: 19px;
    border: 1px solid #414141;
    border-radius: 2px;
    background-color: #5d5d5d;
    color: #c4c4c4;
}

.pick > * {
    grid-area: 1 / 1;
}

.pick select {
    appearance: none;
    width: 100%;
    padding: 0 7px;
    border: none;
    background: none;
    opacity: 1;
}

.pick svg {
    pointer-events: none;
}

.kind {
    width: 70px;
}

.kind select {
    padding-left: 21px;
}

.find {
    margin-left: 7px;
}

.arrows {
    justify-self: end;
    margin-right: 4px;
}

.blend {
    width: 111px;
}

.filters {
    display: flex;
    gap: 10px;
    margin-left: 11px;
}

.filters .letter {
    width: 14px;
    font-size: 16px;
    color: #aaa;
}

.toggle {
    width: 9px;
    height: 15px;
    margin-left: 3px;
    border: 1px solid #444;
    background: linear-gradient(#777 45%, #444 45%);
}

.percent {
    display: flex;
    align-items: center;
    gap: 4px;
    margin-left: auto;
    margin-right: 119px;
    color: #c4c4c4;
}

.percent span {
    display: flex;
    height: 18px;
    border: 1px solid #414141;
}

.percent input {
    width: 35px;
    padding: 0 4px;
    border: none;
    background-color: #4a4a4a;
    color: #686868;
}

.percent button {
    width: 17px;
    background-color: #646464;
}

.locks {
    display: flex;
    align-items: center;
    gap: 8px;
    padding-left: 1px;
    color: #c4c4c4;
}

.layer-list {
    flex: 1;
    padding: 1px 15px 0 0;
    background-color: #464646;
}

.layer {
    display: flex;
    height: 33px;
    background-color: #535353;
    border-top: 1px solid #3c3c3c;
}

.eye {
    width: 30px;
}

.layer-body {
    flex: 1;
    display: flex;
    align-items: center;
    gap: 10px;
    padding: 0 16px 0 3px;
    border-left: 1px solid #3c3c3c;
    background-color: #6b7b95;
    color: #fff;
}

.layer-body em {
    flex: 1;
}

.layer-thumb {
    width: 32px;
    height: 26px;
    border: 1px solid #222;
    background-color: #fff;
}

.layer-foot {
    display: flex;
    justify-content: flex-end;
    gap: 13px;
    height: 19px;
    padding-right: 28px;
    border-top: 1px solid #666;
}

.fx {
    width: 14px;
    color: #999;
    font-family: "Liberation Serif", serif;
    font-size: 14px;
    font-style: italic;
}

/* taskbar */
.taskbar {
    display: flex;
    gap: 1px;
    height: 40px;
    background-color: #0c0c0c;
    color: #fff;
    font-size: 12px;
}

.task {
    width: 48px;
    height: 40px;
}

.start {
    margin-right: -1px;
}

.search {
    margin-right: 2px;
}

.task.open {
    background: linear-gradient(#8edcf0, #8edcf0) center bottom / 40px 2px no-repeat;
}

.task.active {
    background-color: #4c4c4c;
    background-size: 48px 2px;
}

.task-wrap {
    position: relative;
}

.ps-icon {
    width: 21px;
    height: 20px;
    border: 1px solid #8fb4ea;
    background-color: #10145c;
    color: #a9c8f5;
    font-size: 12px;
    line-height: 18px;
    font-weight: bold;
    text-align: center;
}

.ps-icon.small {
    width: 16px;
    height: 15px;
    font-size: 8px;
    line-height: 13px;
}

.preview {
    position: absolute;
    left: 50%;
    bottom: 100%;
    width: 216px;
    margin-left: -108px;
    padding: 0 9px 9px;
    background-color: rgba(76, 76, 76, 0.93);
}

.preview-head {
    display: flex;
    align-items: center;
    gap: 8px;
    height: 33px;
    padding-right: 2px;
}

.preview-title {
    flex: 1;
    white-space: nowrap;
}

.mini {
    width: 100%;
}

.cursor {
    position: absolute;
    right: 8px;
    top: 48px;
}

.tray {
    display: flex;
    align-items: center;
    margin-left: auto;
    gap: 7px;
}

.clock {
    flex-direction: column;
    line-height: 18px;
}

.notes {
    position: relative;
    margin-left: 11px;
    margin-right: 12px;
}

.badge {
    position: absolute;
    left: 6px;
    top: 7px;
    width: 17px;
    height: 17px;
    border: 1px solid #aaa;
    border-radius: 50%;
    background-color: #222;
    font-size: 10px;
    line-height: 15px;
}

.show-desktop {
    width: 5px;
    height: 40px;
    border-left: 1px solid #666;
}
```
